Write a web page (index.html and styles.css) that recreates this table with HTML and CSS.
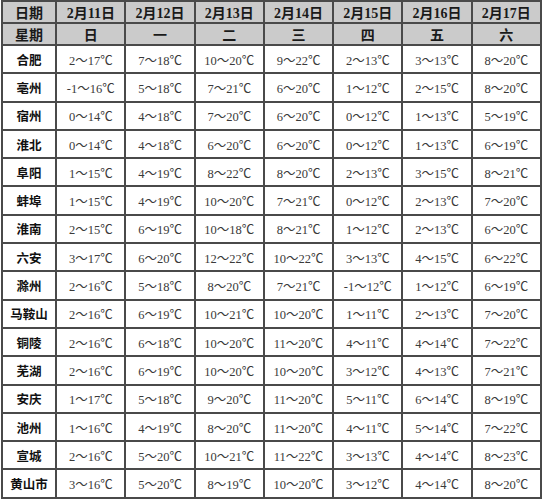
FILE: index.html
```html
<!DOCTYPE html>
<html lang="zh-CN">
<head>
<meta charset="utf-8">
<title>安徽各地天气预报</title>
<link rel="stylesheet" href="styles.css">
</head>
<body>
<table class="forecast">
  <colgroup>
    <col class="c-city">
    <col class="c-day"><col class="c-day"><col class="c-day"><col class="c-day">
    <col class="c-day"><col class="c-day"><col class="c-day">
  </colgroup>
  <thead>
    <tr class="head">
      <th>日期</th><th>2月11日</th><th>2月12日</th><th>2月13日</th><th>2月14日</th><th>2月15日</th><th>2月16日</th><th>2月17日</th>
    </tr>
    <tr class="head">
      <th>星期</th><th>日</th><th>一</th><th>二</th><th>三</th><th>四</th><th>五</th><th>六</th>
    </tr>
  </thead>
  <tbody>
    <tr><th>合肥</th><td>2～17℃</td><td>7～18℃</td><td>10～20℃</td><td>9～22℃</td><td>2～13℃</td><td>3～13℃</td><td>8～20℃</td></tr>
    <tr><th>亳州</th><td>-1～16℃</td><td>5～18℃</td><td>7～21℃</td><td>6～20℃</td><td>1～12℃</td><td>2～15℃</td><td>8～20℃</td></tr>
    <tr><th>宿州</th><td>0～14℃</td><td>4～18℃</td><td>7～20℃</td><td>6～20℃</td><td>0～12℃</td><td>1～13℃</td><td>5～19℃</td></tr>
    <tr><th>淮北</th><td>0～14℃</td><td>4～18℃</td><td>6～20℃</td><td>6～20℃</td><td>0～12℃</td><td>1～13℃</td><td>6～19℃</td></tr>
    <tr><th>阜阳</th><td>1～15℃</td><td>4～19℃</td><td>8～22℃</td><td>8～20℃</td><td>2～13℃</td><td>3～15℃</td><td>8～21℃</td></tr>
    <tr><th>蚌埠</th><td>1～15℃</td><td>4～19℃</td><td>10～20℃</td><td>7～21℃</td><td>0～12℃</td><td>2～13℃</td><td>7～20℃</td></tr>
    <tr><th>淮南</th><td>2～15℃</td><td>6～19℃</td><td>10～18℃</td><td>8～21℃</td><td>1～12℃</td><td>2～13℃</td><td>6～20℃</td></tr>
    <tr><th>六安</th><td>3～17℃</td><td>6～20℃</td><td>12～22℃</td><td>10～22℃</td><td>3～13℃</td><td>4～15℃</td><td>6～22℃</td></tr>
    <tr><th>滁州</th><td>2～16℃</td><td>5～18℃</td><td>8～20℃</td><td>7～21℃</td><td>-1～12℃</td><td>1～12℃</td><td>6～19℃</td></tr>
    <tr><th>马鞍山</th><td>2～16℃</td><td>6～19℃</td><td>10～21℃</td><td>10～20℃</td><td>1～11℃</td><td>2～13℃</td><td>7～20℃</td></tr>
    <tr><th>铜陵</th><td>2～16℃</td><td>6～18℃</td><td>10～20℃</td><td>11～20℃</td><td>4～11℃</td><td>4～14℃</td><td>7～22℃</td></tr>
    <tr><th>芜湖</th><td>2～16℃</td><td>6～19℃</td><td>10～20℃</td><td>10～20℃</td><td>3～12℃</td><td>4～13℃</td><td>7～21℃</td></tr>
    <tr><th>安庆</th><td>1～17℃</td><td>5～18℃</td><td>9～20℃</td><td>11～20℃</td><td>5～11℃</td><td>6～14℃</td><td>8～19℃</td></tr>
    <tr><th>池州</th><td>1～16℃</td><td>4～19℃</td><td>8～20℃</td><td>11～20℃</td><td>4～11℃</td><td>5～14℃</td><td>7～22℃</td></tr>
    <tr><th>宣城</th><td>2～16℃</td><td>5～20℃</td><td>10～21℃</td><td>11～22℃</td><td>3～13℃</td><td>4～14℃</td><td>8～23℃</td></tr>
    <tr><th>黄山市</th><td>3～16℃</td><td>5～20℃</td><td>8～19℃</td><td>10～20℃</td><td>3～12℃</td><td>4～14℃</td><td>8～20℃</td></tr>
  </tbody>
</table>
</body>
</html>
```

FILE: styles.css
```css
html, body {
  margin: 0;
  padding: 0;
  background: #ffffff;
}

.forecast {
  margin-left: 1px;
  width: 541px;
  border-collapse: collapse;
  table-layout: fixed;
  border: 2px solid #2a2a2a;
}

.c-city { width: 54px; }
.c-day { width: 69px; }

.forecast th,
.forecast td {
  border: 2px solid #4a4a4a;
  padding: 0;
  text-align: center;
  vertical-align: middle;
  white-space: nowrap;
  overflow: hidden;
}

.forecast .head th {
  height: 20px;
  background: #cbcbcb;
  color: #1a1a1a;
  font: bold 14px "Liberation Serif", "Noto Sans CJK SC", serif;
}

.forecast tbody th {
  height: 26.3px;
  color: #111111;
  font: bold 12.5px "Noto Sans CJK SC", "Liberation Sans", sans-serif;
}

.forecast tbody td {
  height: 26.3px;
  color: #3a3a3a;
  font: 12.5px "Liberation Serif", "Noto Sans CJK SC", "DejaVu Serif", serif;
}
```
